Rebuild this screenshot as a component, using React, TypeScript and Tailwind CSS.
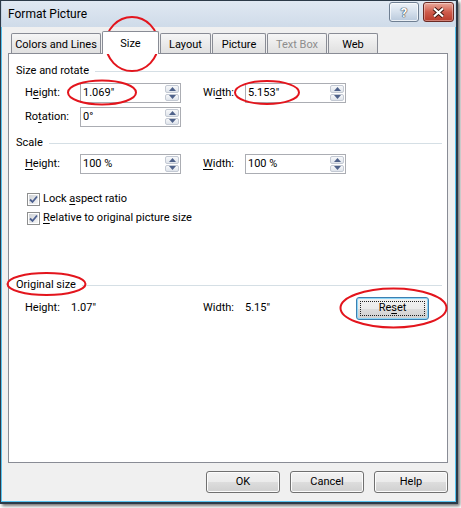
import React from "react";

// Format Picture dialog (Size tab), Windows 7 look
const tabs = [
  { label: "Colors and Lines", w: "w-[90px]" },
  { label: "Size", w: "w-[57px]", active: true },
  { label: "Layout", w: "w-[51px]" },
  { label: "Picture", w: "w-[54px]" },
  { label: "Text Box", w: "w-[60px]", disabled: true },
  { label: "Web", w: "w-[50px]" },
];

function Mn({ children }: { children: React.ReactNode }) {
  return <span className="underline underline-offset-2">{children}</span>;
}

function Arrow({ up }: { up?: boolean }) {
  return (
    <div className="flex-1 flex items-center justify-center border border-[#c3c9d3] rounded-[2px] bg-gradient-to-b from-[#f7f8fa] to-[#dfe4eb]">
      <svg width="7" height="4" viewBox="0 0 7 4">
        <path d={up ? "M0 4L3.5 0L7 4Z" : "M0 0L3.5 4L7 0Z"} fill="#4f628a" />
      </svg>
    </div>
  );
}

function Field({ value }: { value: string }) {
  return (
    <div className="flex h-[20px] w-[101px] border border-[#abadb3] bg-white">
      <span className="flex-1 pl-[2px] leading-[18px]">{value}</span>
      <div className="flex flex-col w-[16px] p-[1px] gap-[1px]">
        <Arrow up />
        <Arrow />
      </div>
    </div>
  );
}

function Header({ children }: { children: React.ReactNode }) {
  return (
    <div className="flex items-center h-[16px] pl-[7px] pr-[5px] gap-[6px]">
      <span className="leading-[16px] whitespace-nowrap">{children}</span>
      <div className="flex-1 h-px bg-[#d5dfe5]" />
    </div>
  );
}

function Check({ children }: { children: React.ReactNode }) {
  return (
    <div className="flex items-center h-[16px] pl-[18px] gap-[3px]">
      <div className="w-[13px] h-[13px] border border-[#8e8f8f] p-[1px] bg-white">
        <div className="w-full h-full bg-gradient-to-br from-[#cfd2d6] to-[#f6f6f6] flex items-center justify-center">
          <svg width="9" height="9" viewBox="0 0 9 9">
            <path d="M1 4.5L3.5 7L8 1.5" stroke="#4b5f8f" strokeWidth="1.8" fill="none" />
          </svg>
        </div>
      </div>
      <span className="leading-[16px] whitespace-nowrap">{children}</span>
    </div>
  );
}

function Button({ children }: { children: React.ReactNode }) {
  return (
    <div className="w-[74px] h-[22px] rounded-[3px] border border-[#707070] shadow-[inset_0_0_0_1px_#fcfcfc] bg-[linear-gradient(#f2f2f2_0%,#ebebeb_50%,#dddddd_51%,#cfcfcf_100%)] flex items-center justify-center">
      {children}
    </div>
  );
}

export default function App() {
  return (
    <div className="relative w-[461px] h-[508px] bg-white overflow-hidden font-['Roboto',sans-serif] text-[11px] text-black">
      <div className="w-[458px] h-[504px] border-l border-t border-r-2 border-b-2 border-[#2c3a48] shadow-[2px_2px_3px_rgba(0,0,0,0.55)] flex flex-col">
        {/* title bar */}
        <div className="h-[26px] flex justify-between pl-[6px] pr-[1px] bg-gradient-to-b from-[#e0e8f2] to-[#cfdbe9] border-l border-r border-[#c6d3e2]">
          <span className="self-center text-[12px]">Format Picture</span>
          <div className="flex gap-[4px] mt-[1px]">
            <div className="w-[30px] h-[20px] rounded-[3px] border border-[#6f7f92] bg-gradient-to-b from-[#eef3f9] via-[#d5e0ec] to-[#b9c9dc] flex items-center justify-center shadow-[inset_0_0_0_1px_rgba(255,255,255,0.7)]">
              <span className="font-bold text-[13px] leading-none text-white [text-shadow:0_0_1px_#33404f,0_0_1px_#33404f,0_0_1px_#33404f]">?</span>
            </div>
            <div className="w-[31px] h-[20px] rounded-[3px] border border-[#6b2a24] bg-gradient-to-b from-[#e9a99c] via-[#cf5b4c] to-[#b83a2b] flex items-center justify-center shadow-[inset_0_0_0_1px_rgba(255,255,255,0.35)]">
              <svg width="13" height="11" viewBox="0 0 13 11">
                <path d="M2 1.5L11 9.5M11 1.5L2 9.5" stroke="#3b1510" strokeWidth="4" />
                <path d="M2 1.5L11 9.5M11 1.5L2 9.5" stroke="#ffffff" strokeWidth="2.2" />
              </svg>
            </div>
          </div>
        </div>

        {/* body */}
        <div className="flex-1 flex flex-col bg-[#f0f0f0] border-l border-r border-b border-[#58c3ef] pl-[6px] pr-[7px] pt-[4px] pb-[7px]">
          <div className="flex items-end h-[22px] pl-[3px] gap-[1px]">
            {tabs.map((t) =>
              t.active ? (
                <div key={t.label} className={`${t.w} h-[23px] pt-[2px] -mb-px relative z-10 bg-white border border-b-0 border-[#898c95] rounded-t-[2px] flex items-center justify-center whitespace-nowrap`}>
                  {t.label}
                </div>
              ) : (
                <div key={t.label} className={`${t.w} h-[20px] pt-[3px] border border-b-0 border-[#898c95] rounded-t-[2px] bg-gradient-to-b from-[#f6f6f6] to-[#e0e0e0] flex items-center justify-center whitespace-nowrap ${t.disabled ? "text-[#8d8d8d]" : ""}`}>
                  {t.label}
                </div>
              )
            )}
          </div>

          <div className="h-[410px] border border-[#898c95] bg-white flex flex-col">
            <div className="mt-[9px]">
              <Header>Size and rotate</Header>
            </div>
            <div className="flex items-center mt-[4px] pl-[16px]">
              <span className="w-[55px]">H<Mn>e</Mn>ight:</span>
              <Field value={'1.069"'} />
              <span className="w-[42px] ml-[22px]">Wi<Mn>d</Mn>th:</span>
              <Field value={'5.153"'} />
            </div>
            <div className="flex items-center mt-[4px] pl-[16px]">
              <span className="w-[55px]">Ro<Mn>t</Mn>ation:</span>
              <Field value="0°" />
            </div>

            <div className="mt-[8px]">
              <Header>Scale</Header>
            </div>
            <div className="flex items-center mt-[3px] pl-[16px]">
              <span className="w-[55px]"><Mn>H</Mn>eight:</span>
              <Field value="100 %" />
              <span className="w-[42px] ml-[22px]"><Mn>W</Mn>idth:</span>
              <Field value="100 %" />
            </div>
            <div className="mt-[17px]">
              <Check>Lock <Mn>a</Mn>spect ratio</Check>
            </div>
            <div className="mt-[3px]">
              <Check><Mn>R</Mn>elative to original picture size</Check>
            </div>

            <div className="mt-[51px]">
              <Header>Original size</Header>
            </div>
            <div className="flex items-center mt-[4px] pl-[16px] h-[23px]">
              <span className="w-[46px]">Height:</span>
              <span className="w-[132px]">1.07"</span>
              <span className="w-[42px]">Width:</span>
              <span className="w-[111px]">5.15"</span>
              <div className="w-[73px] h-[23px] rounded-[3px] border border-[#3c7fb1] shadow-[inset_0_0_0_1px_#8fd6f7] bg-[linear-gradient(#f2f2f2_0%,#ebebeb_50%,#dddddd_51%,#cfcfcf_100%)] p-[3px] flex">
                <div className="flex-1 border border-dotted border-[#222] flex items-center justify-center">
                  Re<Mn>s</Mn>et
                </div>
              </div>
            </div>
          </div>

          <div className="flex justify-end gap-[10px] mt-[8px]">
            <Button>OK</Button>
            <Button>Cancel</Button>
            <Button>Help</Button>
          </div>
        </div>
      </div>

      {/* red annotation marks */}
      <svg className="absolute left-0 top-0 pointer-events-none" width="461" height="508">
        <g fill="none" stroke="#e3151d" strokeWidth="2">
          <ellipse cx="132" cy="44" rx="26" ry="27" />
          <ellipse cx="102" cy="92.5" rx="34" ry="12" />
          <ellipse cx="267" cy="92.5" rx="32" ry="11.5" />
          <ellipse cx="46.5" cy="284" rx="39" ry="11" />
          <ellipse cx="393.5" cy="308" rx="53" ry="19.5" />
        </g>
      </svg>
    </div>
  );
}
